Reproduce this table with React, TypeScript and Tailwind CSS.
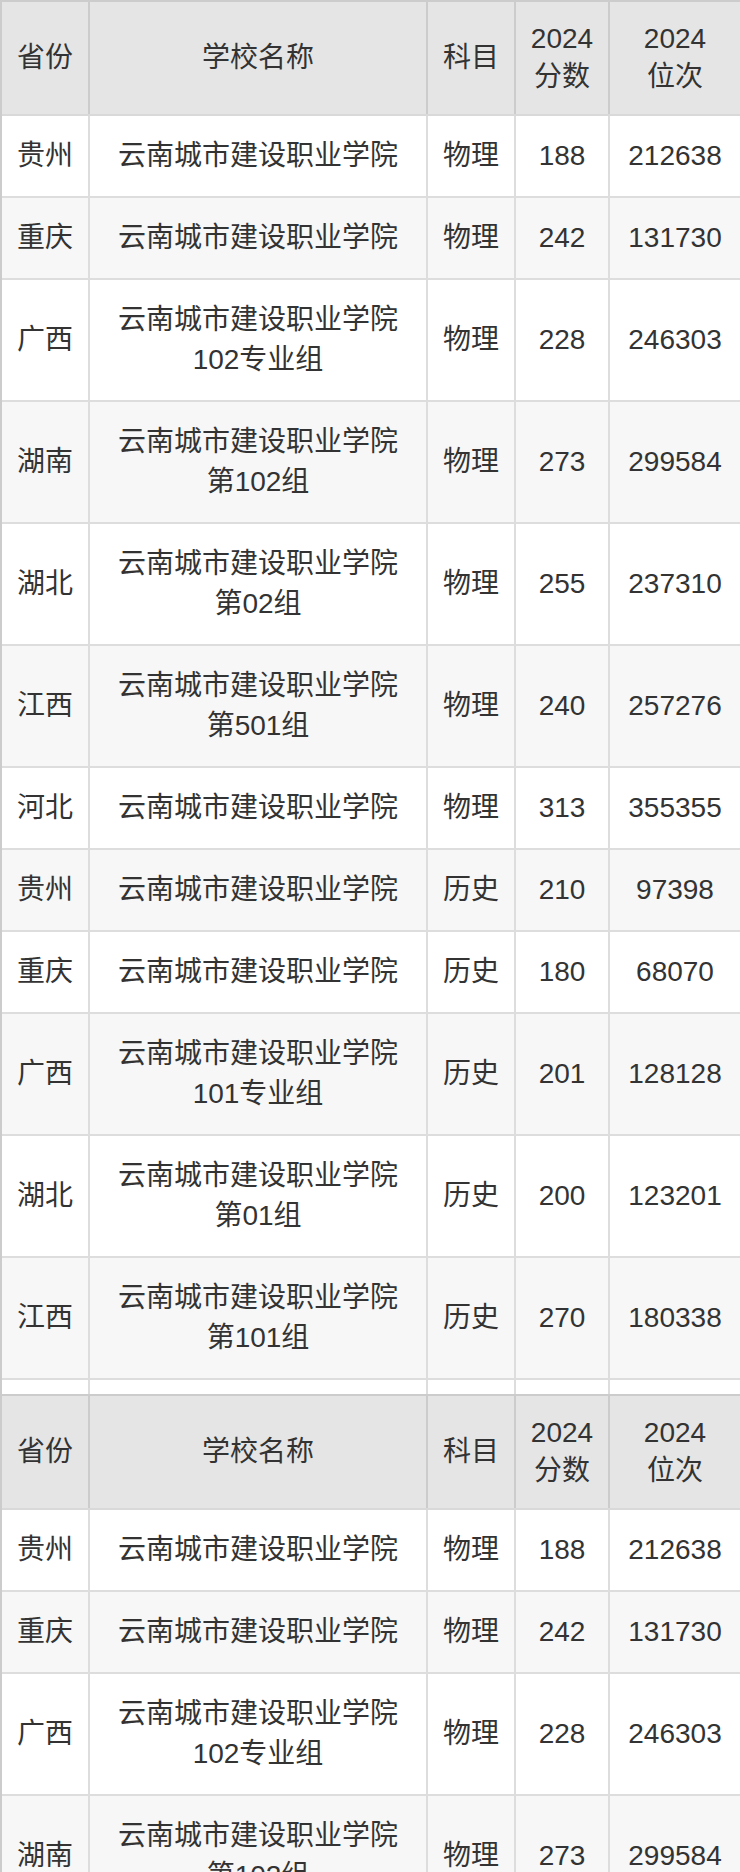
import React from "react";

type Row = { p: string; name: string[]; s: string; score: string; rank: string };

const rowsA: Row[] = [
  { p: "贵州", name: ["云南城市建设职业学院"], s: "物理", score: "188", rank: "212638" },
  { p: "重庆", name: ["云南城市建设职业学院"], s: "物理", score: "242", rank: "131730" },
  { p: "广西", name: ["云南城市建设职业学院", "102专业组"], s: "物理", score: "228", rank: "246303" },
  { p: "湖南", name: ["云南城市建设职业学院", "第102组"], s: "物理", score: "273", rank: "299584" },
  { p: "湖北", name: ["云南城市建设职业学院", "第02组"], s: "物理", score: "255", rank: "237310" },
  { p: "江西", name: ["云南城市建设职业学院", "第501组"], s: "物理", score: "240", rank: "257276" },
  { p: "河北", name: ["云南城市建设职业学院"], s: "物理", score: "313", rank: "355355" },
  { p: "贵州", name: ["云南城市建设职业学院"], s: "历史", score: "210", rank: "97398" },
  { p: "重庆", name: ["云南城市建设职业学院"], s: "历史", score: "180", rank: "68070" },
  { p: "广西", name: ["云南城市建设职业学院", "101专业组"], s: "历史", score: "201", rank: "128128" },
  { p: "湖北", name: ["云南城市建设职业学院", "第01组"], s: "历史", score: "200", rank: "123201" },
  { p: "江西", name: ["云南城市建设职业学院", "第101组"], s: "历史", score: "270", rank: "180338" },
];

const rowsB: Row[] = [
  { p: "贵州", name: ["云南城市建设职业学院"], s: "物理", score: "188", rank: "212638" },
  { p: "重庆", name: ["云南城市建设职业学院"], s: "物理", score: "242", rank: "131730" },
  { p: "广西", name: ["云南城市建设职业学院", "102专业组"], s: "物理", score: "228", rank: "246303" },
  { p: "湖南", name: ["云南城市建设职业学院", "第102组"], s: "物理", score: "273", rank: "299584" },
];

const widths = ["w-[88px]", "w-[338px]", "w-[88px]", "w-[94px]", "w-[132px]"];

function Header() {
  const cells: React.ReactNode[] = [
    "省份",
    "学校名称",
    "科目",
    <>2024<br />分数</>,
    <>2024<br />位次</>,
  ];
  return (
    <div className="flex h-[114px] bg-[#e5e5e5] border-b-2 border-[#d9d9d9]">
      {cells.map((c, i) => (
        <div
          key={i}
          className={`${widths[i]} shrink-0 border-r-2 border-[#cccccc] flex items-center justify-center text-center leading-[38px]`}
        >
          <div>{c}</div>
        </div>
      ))}
    </div>
  );
}

function BodyRow({ r, alt }: { r: Row; alt: boolean }) {
  const tall = r.name.length > 1;
  const cells: React.ReactNode[] = [
    r.p,
    r.name.map((n, i) => (
      <React.Fragment key={i}>
        {i > 0 && <br />}
        {n}
      </React.Fragment>
    )),
    r.s,
    r.score,
    r.rank,
  ];
  return (
    <div
      className={`flex ${tall ? "h-[122px]" : "h-[82px]"} ${alt ? "bg-[#f7f7f7]" : "bg-white"} border-b-2 border-[#dddddd]`}
    >
      {cells.map((c, i) => (
        <div
          key={i}
          className={`${widths[i]} shrink-0 border-r-2 border-[#dddddd] flex items-center justify-center text-center leading-[40px]`}
        >
          <div>{c}</div>
        </div>
      ))}
    </div>
  );
}

function EmptyRow() {
  return (
    <div className="flex h-[14px] bg-white">
      {widths.map((w, i) => (
        <div key={i} className={`${w} shrink-0 border-r-2 border-[#dddddd]`} />
      ))}
    </div>
  );
}

export default function App() {
  return (
    <div
      className="w-[740px] h-[1872px] overflow-hidden bg-white text-[#333333] text-[28px]"
      style={{ fontFamily: '"Liberation Sans", "Noto Sans CJK SC", sans-serif' }}
    >
      <div className="w-[742px] border-l-2 border-[#cccccc]">
        <div className="border-t-2 border-[#cccccc]">
          <Header />
        </div>
        {rowsA.map((r, i) => (
          <BodyRow key={i} r={r} alt={i % 2 === 1} />
        ))}
        <EmptyRow />
        <div className="border-t-2 border-[#cccccc]">
          <Header />
        </div>
        {rowsB.map((r, i) => (
          <BodyRow key={i} r={r} alt={i % 2 === 1} />
        ))}
      </div>
    </div>
  );
}
